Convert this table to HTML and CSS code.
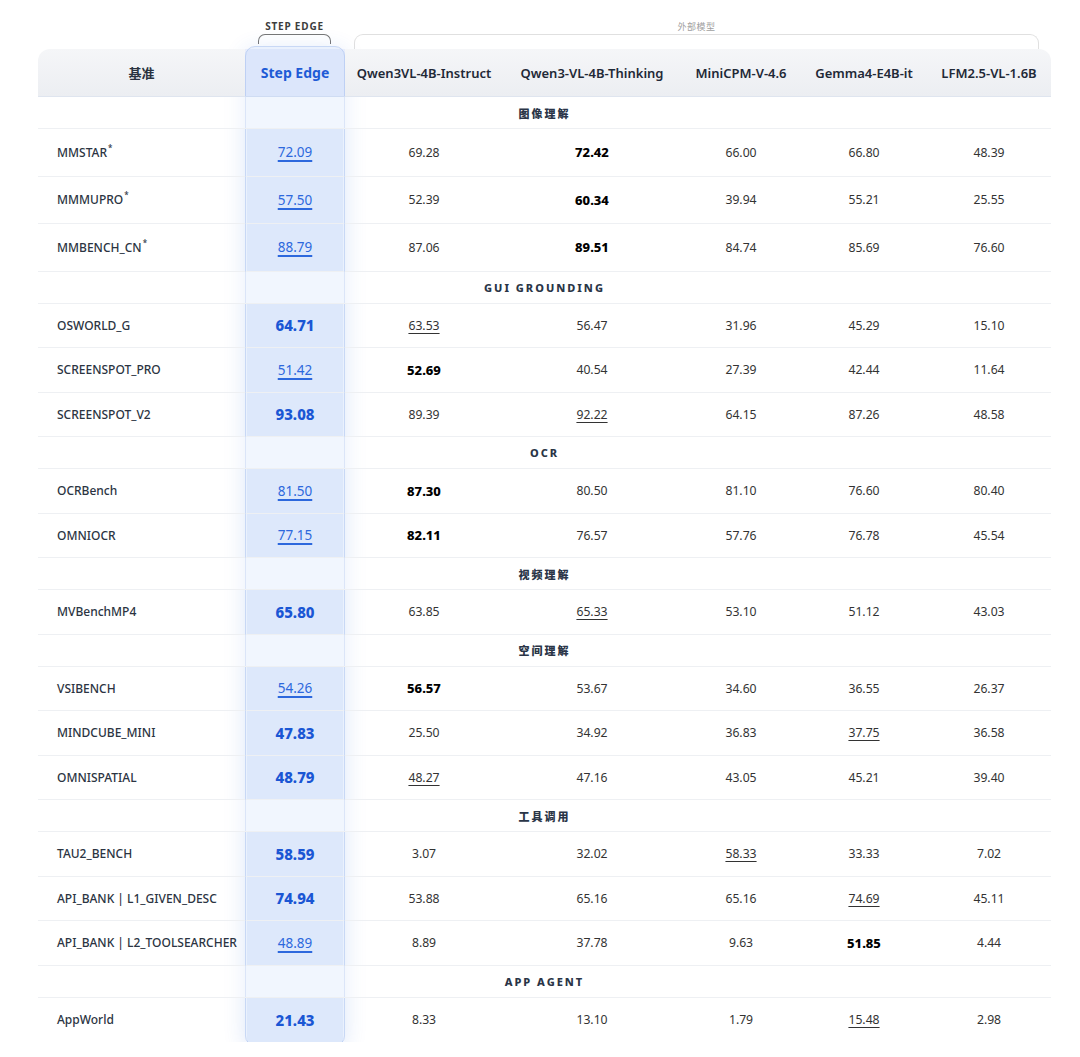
FILE: index.html
```html
<!DOCTYPE html>
<html lang="zh">
<head>
<meta charset="utf-8">
<title>Benchmark</title>
<link rel="stylesheet" href="styles.css">
</head>
<body>
<div class="wrap">
  <div class="groups">
    <div class="grp grp-se">
      <div class="grp-label">STEP EDGE</div>
      <div class="grp-bracket"></div>
    </div>
    <div class="grp grp-ext">
      <div class="grp-label">外部模型</div>
      <div class="grp-bracket"></div>
    </div>
  </div>
  <div class="table-box">
    <div class="se-overlay"></div>
    <table class="bench">
      <colgroup>
        <col class="c-name"><col class="c-se"><col class="c-q1"><col class="c-q2"><col class="c-mini"><col class="c-gem"><col class="c-lfm">
      </colgroup>
      <thead>
        <tr>
          <th class="h-first">基准</th>
          <th class="se">Step Edge</th>
          <th>Qwen3VL-4B-Instruct</th>
          <th>Qwen3-VL-4B-Thinking</th>
          <th>MiniCPM-V-4.6</th>
          <th>Gemma4-E4B-it</th>
          <th class="h-last">LFM2.5-VL-1.6B</th>
        </tr>
      </thead>
      <tbody>
        <tr class="sec"><td colspan="7">图像理解</td></tr>
        <tr class="row tall"><td class="name">MMSTAR<sup>*</sup></td><td class="se"><span class="u">72.09</span></td><td>69.28</td><td><b>72.42</b></td><td>66.00</td><td>66.80</td><td>48.39</td></tr>
        <tr class="row tall"><td class="name">MMMUPRO<sup>*</sup></td><td class="se"><span class="u">57.50</span></td><td>52.39</td><td><b>60.34</b></td><td>39.94</td><td>55.21</td><td>25.55</td></tr>
        <tr class="row tall"><td class="name">MMBENCH_CN<sup>*</sup></td><td class="se"><span class="u">88.79</span></td><td>87.06</td><td><b>89.51</b></td><td>84.74</td><td>85.69</td><td>76.60</td></tr>

        <tr class="sec"><td colspan="7">GUI GROUNDING</td></tr>
        <tr class="row"><td class="name">OSWORLD_G</td><td class="se"><b>64.71</b></td><td><span class="u">63.53</span></td><td>56.47</td><td>31.96</td><td>45.29</td><td>15.10</td></tr>
        <tr class="row"><td class="name">SCREENSPOT_PRO</td><td class="se"><span class="u">51.42</span></td><td><b>52.69</b></td><td>40.54</td><td>27.39</td><td>42.44</td><td>11.64</td></tr>
        <tr class="row"><td class="name">SCREENSPOT_V2</td><td class="se"><b>93.08</b></td><td>89.39</td><td><span class="u">92.22</span></td><td>64.15</td><td>87.26</td><td>48.58</td></tr>

        <tr class="sec"><td colspan="7">OCR</td></tr>
        <tr class="row"><td class="name">OCRBench</td><td class="se"><span class="u">81.50</span></td><td><b>87.30</b></td><td>80.50</td><td>81.10</td><td>76.60</td><td>80.40</td></tr>
        <tr class="row"><td class="name">OMNIOCR</td><td class="se"><span class="u">77.15</span></td><td><b>82.11</b></td><td>76.57</td><td>57.76</td><td>76.78</td><td>45.54</td></tr>

        <tr class="sec"><td colspan="7">视频理解</td></tr>
        <tr class="row"><td class="name">MVBenchMP4</td><td class="se"><b>65.80</b></td><td>63.85</td><td><span class="u">65.33</span></td><td>53.10</td><td>51.12</td><td>43.03</td></tr>

        <tr class="sec"><td colspan="7">空间理解</td></tr>
        <tr class="row"><td class="name">VSIBENCH</td><td class="se"><span class="u">54.26</span></td><td><b>56.57</b></td><td>53.67</td><td>34.60</td><td>36.55</td><td>26.37</td></tr>
        <tr class="row"><td class="name">MINDCUBE_MINI</td><td class="se"><b>47.83</b></td><td>25.50</td><td>34.92</td><td>36.83</td><td><span class="u">37.75</span></td><td>36.58</td></tr>
        <tr class="row"><td class="name">OMNISPATIAL</td><td class="se"><b>48.79</b></td><td><span class="u">48.27</span></td><td>47.16</td><td>43.05</td><td>45.21</td><td>39.40</td></tr>

        <tr class="sec"><td colspan="7">工具调用</td></tr>
        <tr class="row"><td class="name">TAU2_BENCH</td><td class="se"><b>58.59</b></td><td>3.07</td><td>32.02</td><td><span class="u">58.33</span></td><td>33.33</td><td>7.02</td></tr>
        <tr class="row"><td class="name">API_BANK | L1_GIVEN_DESC</td><td class="se"><b>74.94</b></td><td>53.88</td><td>65.16</td><td>65.16</td><td><span class="u">74.69</span></td><td>45.11</td></tr>
        <tr class="row"><td class="name">API_BANK | L2_TOOLSEARCHER</td><td class="se"><span class="u">48.89</span></td><td>8.89</td><td>37.78</td><td>9.63</td><td><b>51.85</b></td><td>4.44</td></tr>

        <tr class="sec"><td colspan="7">APP AGENT</td></tr>
        <tr class="row last"><td class="name">AppWorld</td><td class="se"><b>21.43</b></td><td>8.33</td><td>13.10</td><td>1.79</td><td><span class="u">15.48</span></td><td>2.98</td></tr>
      </tbody>
    </table>
  </div>
</div>
</body>
</html>
```
FILE: styles.css
```css
html, body {
  margin: 0;
  padding: 0;
  background: #ffffff;
}

body {
  font-family: "Noto Sans", "Noto Sans CJK SC", sans-serif;
  color: #333;
}

.wrap {
  padding-left: 38px;
  width: 1013px;
}

/* group labels above the table */
.groups {
  display: flex;
  height: 49px;
  padding-top: 20px;
  box-sizing: border-box;
}

.grp {
  display: flex;
  flex-direction: column;
  align-items: stretch;
}

.grp-label {
  text-align: center;
  line-height: 13px;
  height: 13px;
}

.grp-se {
  margin-left: 220px;
  width: 73px;
}

.grp-se .grp-label {
  font-size: 10px;
  font-weight: 700;
  letter-spacing: 0.8px;
  color: #3d3d3d;
  white-space: nowrap;
}

.grp-se .grp-bracket {
  margin-top: 1px;
  height: 9px;
  border: 1.5px solid #777;
  border-bottom: none;
  border-radius: 7px 7px 0 0;
}

.grp-ext {
  margin-left: 23px;
  width: 685px;
}

.grp-ext .grp-label {
  font-size: 9px;
  color: #a0a0a0;
  letter-spacing: 0.5px;
}

.grp-ext .grp-bracket {
  margin-top: 1px;
  height: 15px;
  border: 1px solid #e0e0e0;
  border-bottom: none;
  border-radius: 9px 9px 0 0;
}

/* table */
.table-box {
  position: relative;
  z-index: 0;
}

.se-overlay {
  position: absolute;
  z-index: -1;
  left: 207px;
  width: 100px;
  top: -3px;
  bottom: -4px;
  box-sizing: border-box;
  border: 1px solid #c8d8f5;
  border-radius: 10px;
  background: #eaf1fd;
  box-shadow: 0 4px 22px rgba(40, 100, 220, 0.16);
}

.bench {
  width: 1013px;
  table-layout: fixed;
  border-collapse: separate;
  border-spacing: 0;
}

.c-name { width: 207px; }
.c-se { width: 100px; }
.c-q1 { width: 158px; }
.c-q2 { width: 178px; }
.c-mini { width: 120px; }
.c-gem { width: 126px; }
.c-lfm { width: 124px; }

.bench th {
  height: 48px;
  padding: 0;
  font-size: 13px;
  font-weight: 600;
  color: #1f2937;
  background: linear-gradient(#f5f6f8, #eceef2);
  border-bottom: 1px solid #dfe5ef;
  white-space: nowrap;
  box-sizing: border-box;
}

.bench th.h-first {
  border-top-left-radius: 12px;
  font-weight: 700;
  color: #2a3340;
}

.bench th.h-last { border-top-right-radius: 12px; }

.bench th.se {
  background: rgba(120, 160, 240, 0.12);
  color: #1e5bd6;
  font-size: 14px;
  font-weight: 700;
  border-bottom-color: #cfdcf3;
}

.bench td {
  padding: 0;
  text-align: center;
  font-size: 12.2px;
  color: #333;
  border-bottom: 1px solid #eef0f3;
  box-sizing: border-box;
  white-space: nowrap;
}

.sec td {
  height: 32px;
  font-size: 11px;
  font-weight: 800;
  letter-spacing: 2px;
  color: #2a3547;
  background: rgba(255, 255, 255, 0.35);
}

.row td {
  height: 44.5px;
}

.row.tall td {
  height: 47.5px;
}

.row.last td {
  border-bottom: none;
}

.bench td.name {
  text-align: left;
  padding-left: 19px;
  font-size: 12px;
  font-weight: 500;
  color: #2b3442;
}

.name sup {
  font-size: 8px;
  line-height: 0;
  vertical-align: 6px;
  margin-left: 1px;
}

.bench td b {
  font-size: 13px;
  font-weight: 800;
  color: #000;
}

.u {
  text-decoration: underline;
  text-decoration-thickness: 1px;
  text-underline-offset: 3px;
}

.bench td.se {
  border-left: 2px solid transparent;
  border-right: 2px solid transparent;
  background: rgba(110, 155, 240, 0.1);
  background-clip: padding-box;
  font-size: 13.5px;
  color: #2d68dd;
}

.bench td.se b {
  color: #1a56d4;
  font-size: 15px;
}

.bench td.se .u {
  text-decoration-color: #2d68dd;
  text-decoration-thickness: 1.5px;
}
```
